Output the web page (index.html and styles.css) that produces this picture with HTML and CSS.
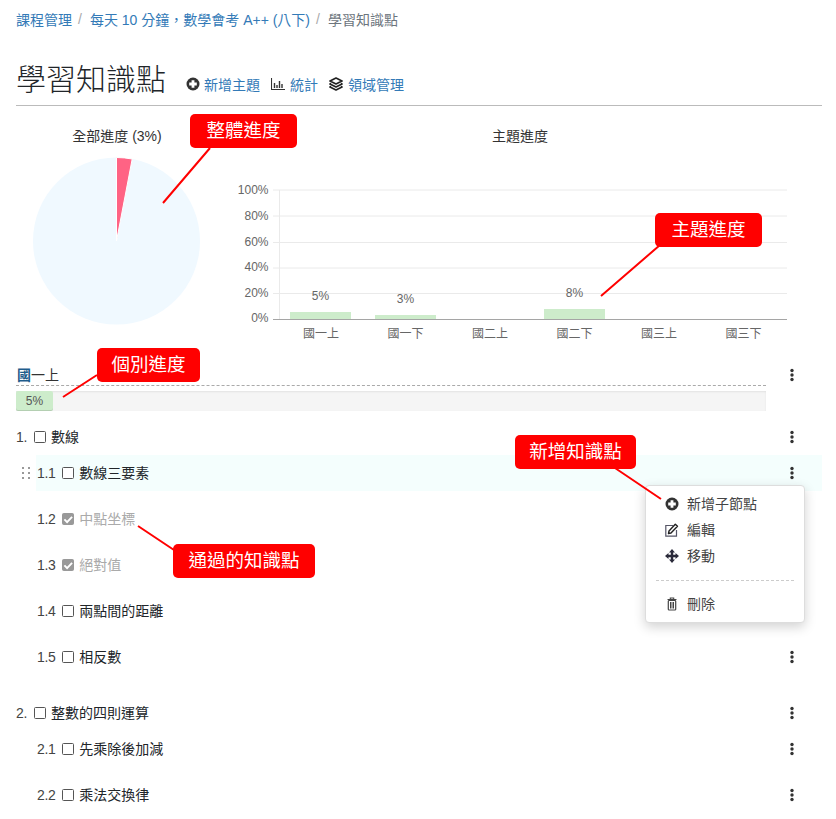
FILE: index.html
```html
<!DOCTYPE html>
<html lang="zh-Hant">
<head>
<meta charset="utf-8">
<title>學習知識點</title>
<link rel="stylesheet" href="styles.css">
</head>
<body>
<div class="page">
  <nav class="crumbs">
    <a href="#">課程管理</a><span class="sep">/</span>
    <a href="#">每天 10 分鐘，數學會考 A++ (八下)</a><span class="sep">/</span>
    <span class="current">學習知識點</span>
  </nav>

  <header class="head">
    <h1>學習知識點</h1>
    <div class="actions">
      <a href="#" class="action"><svg class="ico tight" viewBox="0 0 14 14"><circle cx="7" cy="7" r="6.5" fill="#333"/><path d="M7 3.200v7.600M3.200 7h7.600" stroke="#fff" stroke-width="2.800"/></svg>新增主題</a>
      <a href="#" class="action"><svg class="ico" viewBox="0 0 14 14"><path d="M.5 1v11.500H14" fill="none" stroke="#333" stroke-width="1.100"/><path d="M3.500 6v5M6 8v3M8.500 4v7M11 7v4" stroke="#333" stroke-width="1.400"/></svg>統計</a>
      <a href="#" class="action"><svg class="ico" viewBox="0 0 14 14"><path d="M7 1 13 4 7 7 1 4zM2.200 6.400 1 7l6 3 6-3-1.200-.6M2.200 9.400 1 10l6 3 6-3-1.200-.6" fill="none" stroke="#222" stroke-width="1.700" stroke-linejoin="round"/></svg>領域管理</a>
    </div>
  </header>

  <section class="charts">
    <div class="chart pie">
      <div class="chart-title">全部進度 (3%)</div>
      <svg class="plot" viewBox="16 146 202 199">
        <circle cx="116.5" cy="241" r="83.5" fill="#f0f9ff"/>
        <path d="M116.5 241V157.5A83.5 83.5 0 0 1 132.2 159Z" fill="#ff6384" stroke="#fff" stroke-width="1"/>
      </svg>
    </div>
    <div class="chart bars">
      <div class="chart-title">主題進度</div>
      <svg class="plot" viewBox="218 146 604 199">
        <g class="grid">
          <path d="M273 190H787M273 216H787M273 242.500H787M273 268H787M273 293.500H787M279.500 190V319"/>
        </g>
        <path d="M273 319.500H787" class="axis"/>
        <g class="bar">
          <rect x="290" y="312" width="61" height="7"/>
          <rect x="375" y="315" width="61" height="4"/>
          <rect x="544" y="309" width="61" height="10"/>
        </g>
        <g class="ylabels">
          <text x="268.500" y="194">100%</text>
          <text x="268.500" y="219.500">80%</text>
          <text x="268.500" y="245.500">60%</text>
          <text x="268.500" y="271">40%</text>
          <text x="268.500" y="297">20%</text>
          <text x="268.500" y="322">0%</text>
        </g>
        <g class="xlabels">
          <text x="321" y="338">國一上</text>
          <text x="405.500" y="338">國一下</text>
          <text x="490" y="338">國二上</text>
          <text x="574.500" y="338">國二下</text>
          <text x="659" y="338">國三上</text>
          <text x="743.500" y="338">國三下</text>
          <text x="320.500" y="300">5%</text>
          <text x="405.500" y="303">3%</text>
          <text x="574.500" y="297">8%</text>
        </g>
      </svg>
    </div>
  </section>

  <section class="topic">
    <div class="topic-main">
      <div class="topic-name"><span class="first-glyph">國</span>一上</div>
      <div class="progress"><div class="progress-fill" style="width:37px">5%</div></div>
    </div>
    <button class="kebab"><svg viewBox="0 0 6 14"><circle cx="3" cy="2.500" r="1.700"/><circle cx="3" cy="7" r="1.700"/><circle cx="3" cy="11.500" r="1.700"/></svg></button>
  </section>

  <section class="tree">
    <div class="row">
      <span class="num">1.</span><input type="checkbox" class="box"><span class="label">數線</span>
      <button class="kebab"><svg viewBox="0 0 6 14"><circle cx="3" cy="2.500" r="1.700"/><circle cx="3" cy="7" r="1.700"/><circle cx="3" cy="11.500" r="1.700"/></svg></button>
    </div>
    <div class="row sub hover">
      <svg class="drag" viewBox="0 0 8 12"><g fill="#999"><rect x="0" y="0" width="2" height="2"/><rect x="6" y="0" width="2" height="2"/><rect x="0" y="5" width="2" height="2"/><rect x="6" y="5" width="2" height="2"/><rect x="0" y="10" width="2" height="2"/><rect x="6" y="10" width="2" height="2"/></g></svg>
      <span class="num">1.1</span><input type="checkbox" class="box"><span class="label">數線三要素</span>
      <button class="kebab"><svg viewBox="0 0 6 14"><circle cx="3" cy="2.500" r="1.700"/><circle cx="3" cy="7" r="1.700"/><circle cx="3" cy="11.500" r="1.700"/></svg></button>
    </div>
    <div class="row sub">
      <span class="num">1.2</span><input type="checkbox" class="box" checked><span class="label done">中點坐標</span>
    </div>
    <div class="row sub">
      <span class="num">1.3</span><input type="checkbox" class="box" checked><span class="label done">絕對值</span>
    </div>
    <div class="row sub">
      <span class="num">1.4</span><input type="checkbox" class="box"><span class="label">兩點間的距離</span>
    </div>
    <div class="row sub last">
      <span class="num">1.5</span><input type="checkbox" class="box"><span class="label">相反數</span>
      <button class="kebab"><svg viewBox="0 0 6 14"><circle cx="3" cy="2.500" r="1.700"/><circle cx="3" cy="7" r="1.700"/><circle cx="3" cy="11.500" r="1.700"/></svg></button>
    </div>
    <div class="row">
      <span class="num">2.</span><input type="checkbox" class="box"><span class="label">整數的四則運算</span>
      <button class="kebab"><svg viewBox="0 0 6 14"><circle cx="3" cy="2.500" r="1.700"/><circle cx="3" cy="7" r="1.700"/><circle cx="3" cy="11.500" r="1.700"/></svg></button>
    </div>
    <div class="row sub">
      <span class="num">2.1</span><input type="checkbox" class="box"><span class="label">先乘除後加減</span>
      <button class="kebab"><svg viewBox="0 0 6 14"><circle cx="3" cy="2.500" r="1.700"/><circle cx="3" cy="7" r="1.700"/><circle cx="3" cy="11.500" r="1.700"/></svg></button>
    </div>
    <div class="row sub">
      <span class="num">2.2</span><input type="checkbox" class="box"><span class="label">乘法交換律</span>
      <button class="kebab"><svg viewBox="0 0 6 14"><circle cx="3" cy="2.500" r="1.700"/><circle cx="3" cy="7" r="1.700"/><circle cx="3" cy="11.500" r="1.700"/></svg></button>
    </div>
  </section>

  <div class="menu">
    <div class="menu-item"><svg class="ico" viewBox="0 0 14 14"><circle cx="7" cy="7" r="6.500" fill="#333"/><path d="M7 3.200v7.600M3.200 7h7.600" stroke="#fff" stroke-width="2.800"/></svg>新增子節點</div>
    <div class="menu-item"><svg class="ico" viewBox="0 0 14 14"><path d="M8 2.500H.8v10.700h10.700V7" fill="none" stroke="#556" stroke-width="1.200"/><path d="M3.500 10.500 4 8l6.300-6.800 2.200 2.100L6 10z" fill="#fff" stroke="#222" stroke-width="1.400" stroke-linejoin="round"/></svg>編輯</div>
    <div class="menu-item"><svg class="ico" viewBox="0 0 14 14"><path d="M7 0 10 3.500H8.200V5.800H10.500V4L14 7l-3.500 3V8.200H8.200V10.500H10L7 14 4 10.500H5.800V8.200H3.500V10L0 7l3.500-3V5.800H5.800V3.500H4z" fill="#2a2a3a"/></svg>移動</div>
    <div class="menu-sep"></div>
    <div class="menu-item"><svg class="ico" viewBox="0 0 14 14"><path d="M2.500 2.500h9M5.300 2.300V1h3.400v1.300" fill="none" stroke="#444" stroke-width="1.100"/><rect x="3.300" y="3.500" width="7.400" height="9.500" rx=".8" fill="none" stroke="#444" stroke-width="1.200"/><path d="M5.500 5v6.500M7 5v6.500M8.500 5v6.500" stroke="#444" stroke-width="1"/></svg>刪除</div>
  </div>

  <svg class="leaders" viewBox="0 0 836 819">
    <path d="M210 148 163 203M660 245 601 296M97 375 63 397M615 468 661 499M138 526 174 550"/>
  </svg>
  <div class="callout c-overall">整體進度</div>
  <div class="callout c-topic">主題進度</div>
  <div class="callout c-each">個別進度</div>
  <div class="callout c-add">新增知識點</div>
  <div class="callout c-pass">通過的知識點</div>
</div>
</body>
</html>
```
FILE: styles.css
```css
* { box-sizing: border-box; }
html, body { margin: 0; padding: 0; }
body {
  font-family: "Liberation Sans", "Noto Sans CJK TC", sans-serif;
  font-size: 14px;
  color: #212529;
  background: #fff;
}
a { color: #337ab7; text-decoration: none; }
.page { position: relative; padding: 0 14px 0 16px; height: 819px; overflow: hidden; }

.crumbs { height: 38px; display: flex; align-items: center; white-space: pre; font-size: 14px; }
.crumbs .sep { color: #aaa; padding: 0 8px 0 6px; }
.crumbs .current { color: #6c757d; }

.head { height: 68px; display: flex; align-items: center; border-bottom: 1px solid #bbb; padding: 16px 0 0 0; }
.head h1 { margin: 0; font-size: 30px; font-weight: 300; line-height: 40px; color: #212529; }
.actions { display: flex; margin: 9px 0 0 20px; }
.action { display: flex; align-items: center; margin-right: 11px; }
.ico { width: 14px; height: 14px; flex: none; margin-right: 5px; }
.ico.tight { margin-right: 4px; }

.charts { display: flex; height: 239px; }
.chart { display: flex; flex-direction: column; }
.chart.pie { width: 202px; flex: none; }
.chart.bars { flex: 1; }
.chart-title { height: 20px; margin-top: 20px; line-height: 20px; text-align: center; font-size: 14px; color: #333; }
.plot { display: block; width: 100%; height: 199px; }
.grid path { fill: none; stroke: #eaeaea; stroke-width: 1; }
.axis { stroke: #a5a5a5; stroke-width: 1; fill: none; }
.bar rect { fill: #cdeccb; }
.ylabels text { font-size: 12px; fill: #666; text-anchor: end; }
.xlabels text { font-size: 12px; fill: #666; text-anchor: middle; }

.topic { display: flex; margin-top: 20px; height: 54px; }
.topic-main { width: 750px; flex: none; }
.topic-name { height: 21px; line-height: 20px; border-bottom: 1px dashed #aaa; padding-left: 1px; color: #333; }
.first-glyph { color: #1f5d8c; font-weight: 700; }
.progress { margin-top: 5px; height: 20px; background: #f5f5f5; box-shadow: inset 0 1px 2px rgba(0,0,0,.08); }
.progress-fill { height: 20px; background: #cdeccb; border-radius: 2px; text-align: center; line-height: 20px; font-size: 12px; color: #555; box-shadow: inset 0 -1px 0 rgba(0,0,0,.12); }
.topic .kebab { margin: 3px 0 0 21px; }

.row { position: relative; display: flex; align-items: center; height: 36px; padding-right: 25px; }
.row.sub { margin: 0 0 10px 20px; padding-left: 1px; }
.row.sub.last { margin-bottom: 20px; }
.row.hover { background: #f4fefd; }
.num { color: #444; margin-right: 7px; letter-spacing: -.4px; }
.box {
  appearance: none;
  margin: 0 5px 0 0;
  width: 12px;
  height: 12px;
  flex: none;
  border: 1.5px solid #555;
  border-radius: 1.5px;
  background: #fff;
}
.box:checked {
  border-color: #999;
  background: #999 url("data:image/svg+xml,%3Csvg xmlns='http://www.w3.org/2000/svg' viewBox='0 0 12 12'%3E%3Cpath d='M2 6.200 4.800 9 10 3.500' fill='none' stroke='white' stroke-width='2'/%3E%3C/svg%3E") center / 11px 11px no-repeat;
}
.label { color: #212529; margin-top: -2px; }
.label.done { color: #aaa; }
.drag { position: absolute; left: -14px; top: 12px; width: 8px; height: 12px; }
.kebab { margin: 0 0 0 auto; padding: 0; border: 0; background: none; width: 10px; height: 14px; flex: none; }
.kebab svg { display: block; width: 6px; height: 14px; margin: 0 auto; fill: #333; }

.menu { position: absolute; left: 645px; top: 485px; width: 160px; height: 138px; background: #fff; border: 1px solid #ddd; border-radius: 4px; box-shadow: 0 4px 12px rgba(0,0,0,.18); padding: 4px 0; }
.menu-item { display: flex; align-items: center; height: 26px; padding-left: 19px; color: #444; }
.menu-item .ico { margin: 1px 8px 0 0; }
.menu-sep { border-top: 1px dashed #ccc; margin: 12px 10px 9px; }

.leaders { position: absolute; left: 0; top: 0; width: 836px; height: 819px; pointer-events: none; }
.leaders path { fill: none; stroke: #f00; stroke-width: 2; }
.callout { position: absolute; height: 34px; line-height: 34px; text-align: center; background: #f00; color: #fff; border-radius: 5px; font-size: 18.5px; }
.c-overall { left: 190px; top: 114px; width: 107px; }
.c-topic { left: 655px; top: 213px; width: 107px; }
.c-each { left: 97px; top: 348px; width: 103px; }
.c-add { left: 515px; top: 435px; width: 121px; }
.c-pass { left: 173px; top: 544px; width: 142px; }
```
